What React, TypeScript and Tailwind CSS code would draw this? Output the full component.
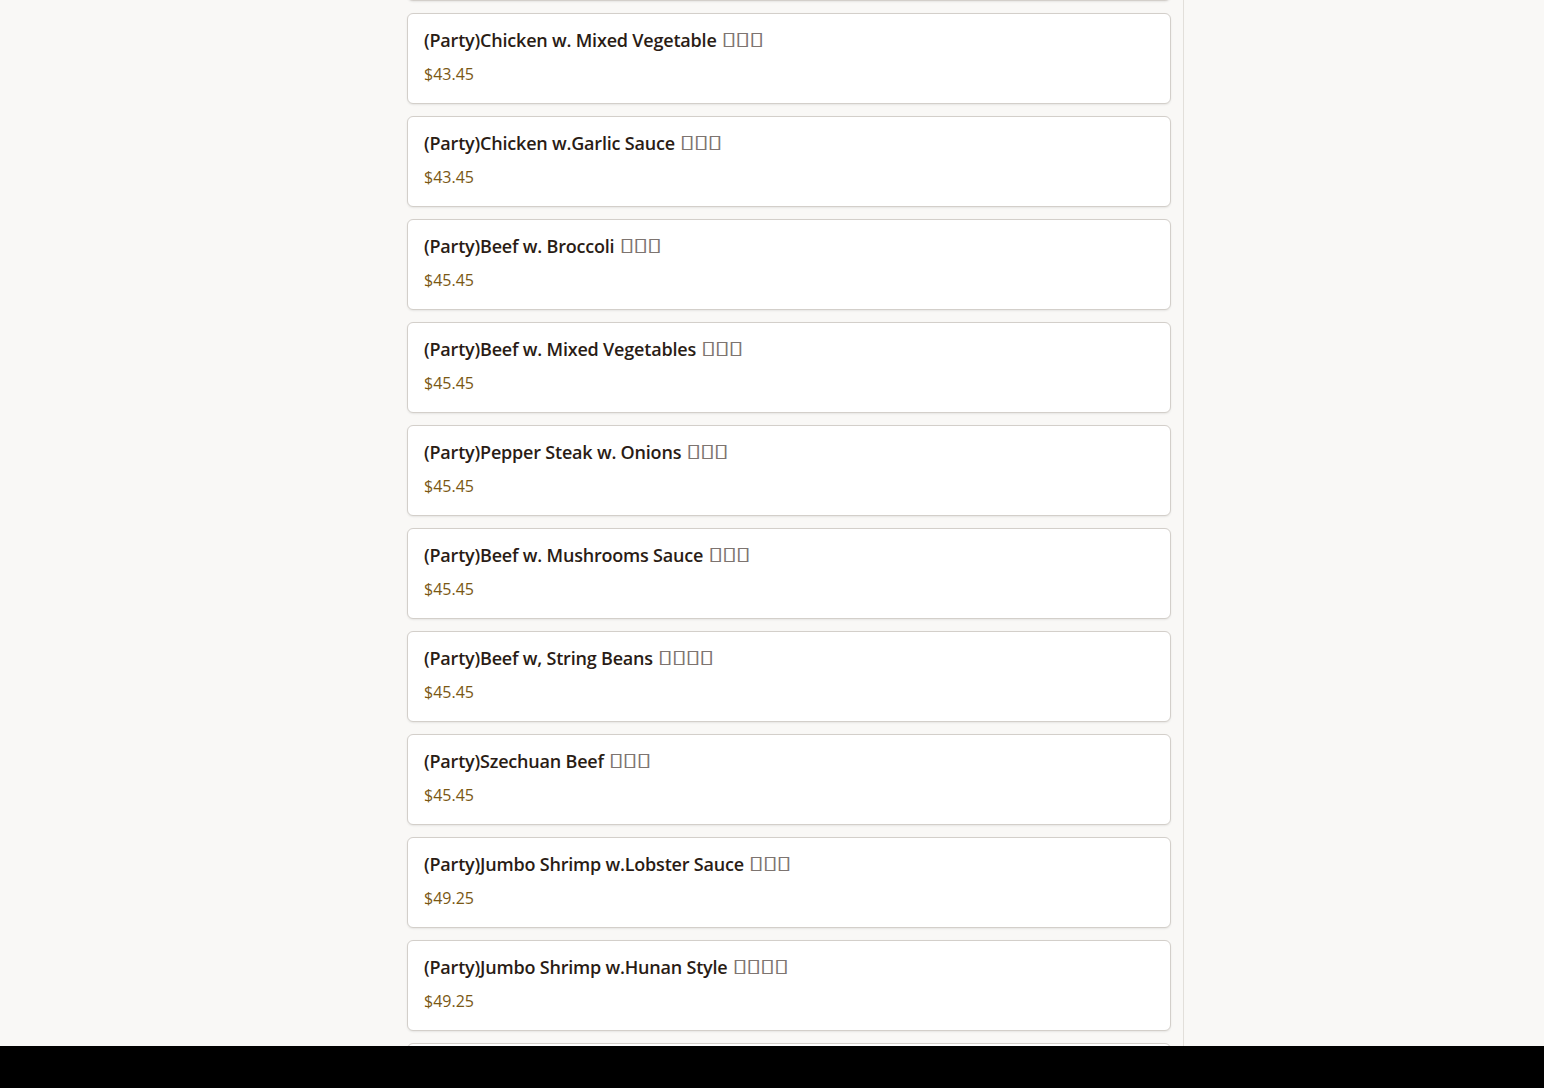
const ITEMS = [
  { name: "(Party)Chicken w. Broccoli", cn: "▯▯▯", price: "$43.45" },
  { name: "(Party)Chicken w. Mixed Vegetable", cn: "▯▯▯", price: "$43.45" },
  { name: "(Party)Chicken w.Garlic Sauce", cn: "▯▯▯", price: "$43.45" },
  { name: "(Party)Beef w. Broccoli", cn: "▯▯▯", price: "$45.45" },
  { name: "(Party)Beef w. Mixed Vegetables", cn: "▯▯▯", price: "$45.45" },
  { name: "(Party)Pepper Steak w. Onions", cn: "▯▯▯", price: "$45.45" },
  { name: "(Party)Beef w. Mushrooms Sauce", cn: "▯▯▯", price: "$45.45" },
  { name: "(Party)Beef w, String Beans", cn: "▯▯▯▯", price: "$45.45" },
  { name: "(Party)Szechuan Beef", cn: "▯▯▯", price: "$45.45" },
  { name: "(Party)Jumbo Shrimp w.Lobster Sauce", cn: "▯▯▯", price: "$49.25" },
  { name: "(Party)Jumbo Shrimp w.Hunan Style", cn: "▯▯▯▯", price: "$49.25" },
  { name: "(Party)Shrimp w. Broccoli", cn: "▯▯▯", price: "$49.25" },
];

function MenuCard({ name, cn, price }: { name: string; cn: string; price: string }) {
  return (
    <div className="h-[91px] shrink-0 rounded-md border border-[#d3cfca] bg-white px-4 pt-[14px] shadow-[0_1px_2px_rgba(0,0,0,0.08)]">
      <div className="h-6 text-[18px] leading-6 font-semibold tracking-[-0.2px] text-[#2a1c15]">
        {name}{" "}
        <span className="inline-block translate-y-px scale-y-[0.68] font-['DejaVu_Sans',sans-serif] text-[28px] leading-[0] font-normal tracking-[-1.6px] text-[#7d7470]">
          {cn}
        </span>
      </div>
      <div className="mt-[10px] h-6 text-[16px] leading-6 text-[#7a5814]">{price}</div>
    </div>
  );
}

export default function App() {
  return (
    <div className="flex h-screen flex-col overflow-hidden bg-[#f9f8f6] font-['Open_Sans',sans-serif]">
      <div className="flex-1 overflow-hidden">
        <div className="ml-[395px] flex h-full w-[789px] flex-col border-r border-[#e2dfda] px-3">
          <div className="-mt-[90px] flex flex-col gap-3">
            {ITEMS.map((it) => (
              <MenuCard key={it.name} {...it} />
            ))}
          </div>
        </div>
      </div>
      <div className="h-[42px] shrink-0 bg-black" />
    </div>
  );
}
